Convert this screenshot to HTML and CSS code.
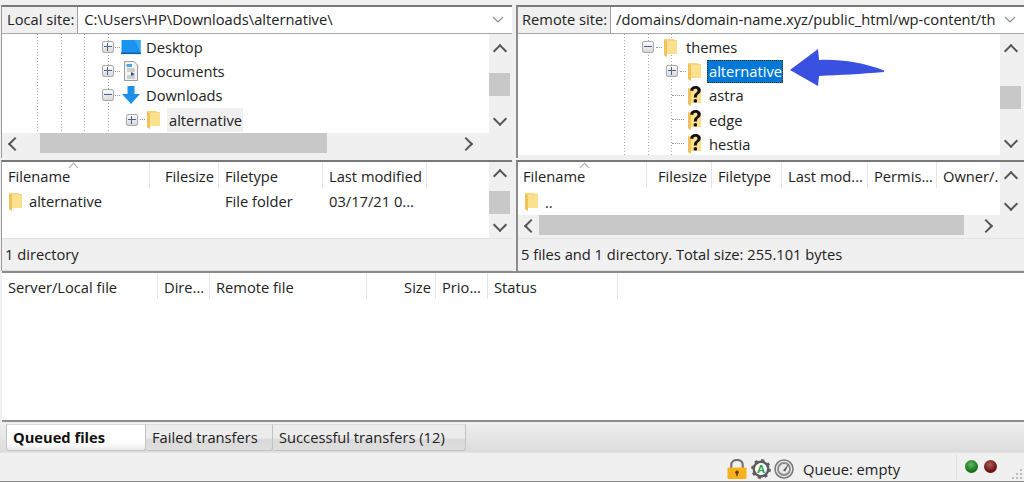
FILE: index.html
```html
<!DOCTYPE html>
<html lang="en">
<head>
<meta charset="utf-8">
<title>FileZilla</title>
<link rel="stylesheet" href="styles.css">
</head>
<body>
<svg class="defs" width="0" height="0" aria-hidden="true">
  <defs>
    <symbol id="folder" viewBox="0 0 13 19">
      <path d="M0 1H9L10 2H13V16H3V19L0 17Z" fill="#fbe08e"/>
      <path d="M0 1L3 3V19L0 17Z" fill="#f0c35a"/>
      <path d="M0 1H9L10 2H13V3H3Z" fill="#f7d67e"/>
    </symbol>
    <symbol id="qfolder" viewBox="0 0 17 21">
      <path d="M1 3H10L11 4H14V18H4V21L1 19Z" fill="#fbe08e"/>
      <path d="M1 3L4 5V21L1 19Z" fill="#f0c35a"/>
      <path d="M3.2 5.5C3.4 2.6 5.4 1 8.4 1C11.6 1 13.8 2.7 13.8 5.3C13.8 7.2 12.7 8.2 11.3 9.2C10.2 10 9.9 10.6 9.9 12.4H6.9C6.9 10 7.4 8.9 8.9 7.9C10 7.1 10.5 6.5 10.5 5.5C10.5 4.3 9.7 3.7 8.4 3.7C7.1 3.7 6.3 4.5 6.2 5.9Z" fill="#111"/>
      <rect x="6.8" y="14.2" width="3.2" height="3.4" rx="1" fill="#111"/>
    </symbol>
  </defs>
</svg>
<div class="app">
  <div class="panes">
    <section class="pane">
      <div class="site">
        <div class="site-label">Local site:</div>
        <div class="site-input">
          <span class="path">C:\Users\HP\Downloads\alternative\</span>
          <svg class="combo" viewBox="0 0 12 7"><path d="M1 1L6 6L11 1" fill="none" stroke="#8a8a8a" stroke-width="1.2"/></svg>
        </div>
      </div>
      <div class="body local-tree-h">
        <div class="tree tree-left">
          <div class="row in-left-1"><span class="twisty plus"></span><span class="dots short"></span>
            <svg class="ico-20 ico-desktop" viewBox="0 0 20 15"><rect x="0.5" y="0.5" width="19" height="13" fill="#1a94f0"/><rect x="0" y="13" width="20" height="1.6" fill="#0a5fa8"/><path d="M14 0.5H19.500V13Z" fill="#36aaf7"/></svg>
            <span class="label gap-5">Desktop</span></div>
          <div class="row in-left-1"><span class="twisty plus"></span><span class="dots short"></span>
            <svg class="ico-20" viewBox="0 0 20 20"><path d="M3.5 .5H13L16.500 4V19.500H3.500Z" fill="#f4f4f4" stroke="#9a9a9a"/><path d="M5.500 3H11V6H5.500Z" fill="#4fa7e8"/><path d="M6 8H14M6 10H14M6 15H14M6 17H14" stroke="#a8a8a8"/><path d="M10 11L14 13L10 15Z" fill="#33567a"/></svg>
            <span class="label gap-5">Documents</span></div>
          <div class="row in-left-1"><span class="twisty minus"></span><span class="dots short"></span>
            <svg class="ico-20" viewBox="0 0 20 20"><path d="M6.500 1H13.500V9H19L10 19L1 9H6.500Z" fill="#1d8fe6"/></svg>
            <span class="label gap-5">Downloads</span></div>
          <div class="row in-left-2"><span class="twisty plus"></span><span class="dots mid"></span>
            <svg class="ico-folder"><use href="#folder"/></svg>
            <span class="label hover">alternative</span></div>
        </div>
        <div class="vbar vbar-tree vbar-inset">
          <span class="arrow up"></span>
          <div class="track pad-thumb-a"><span class="thumb"></span></div>
          <span class="arrow down"></span>
        </div>
      </div>
      <div class="hbar hbar-left">
        <span class="arrow left"></span>
        <div class="htrack"><span class="hthumb w-left"></span></div>
        <span class="arrow right"></span>
      </div>
    </section>

    <section class="pane remote">
      <div class="site">
        <div class="site-label">Remote site:</div>
        <div class="site-input">
          <span class="path">/domains/domain-name.xyz/public_html/wp-content/th</span>
          <svg class="combo" viewBox="0 0 12 7"><path d="M1 1L6 6L11 1" fill="none" stroke="#8a8a8a" stroke-width="1.2"/></svg>
        </div>
      </div>
      <div class="body remote-tree-h">
        <div class="tree tree-right">
          <div class="row in-right-1"><span class="twisty minus"></span><span class="dots"></span>
            <svg class="ico-folder"><use href="#folder"/></svg>
            <span class="label gap-8">themes</span></div>
          <div class="row in-right-2"><span class="twisty plus"></span><span class="dots"></span>
            <svg class="ico-folder"><use href="#folder"/></svg>
            <span class="label selected">alternative</span></div>
          <div class="row in-right-3"><span class="dots long"></span>
            <svg class="ico-q"><use href="#qfolder"/></svg>
            <span class="label gap-6">astra</span></div>
          <div class="row in-right-3"><span class="dots long"></span>
            <svg class="ico-q"><use href="#qfolder"/></svg>
            <span class="label gap-6">edge</span></div>
          <div class="row in-right-3"><span class="dots long"></span>
            <svg class="ico-q"><use href="#qfolder"/></svg>
            <span class="label gap-6">hestia</span></div>
        </div>
        <div class="vbar vbar-tree vbar-inset-r">
          <span class="arrow up"></span>
          <div class="track pad-thumb-b"><span class="thumb"></span></div>
          <span class="arrow down"></span>
        </div>
      </div>
      <svg class="pointer" viewBox="0 0 96 38"><path d="M0 21L28 0L29 11C50 10 75 14 94 21.500V23C70 25 50 26 29 27L28 37Z" fill="#3a50e0"/></svg>
    </section>

    <section class="pane list-pane">
      <div class="body list-left-h">
        <div class="list">
          <div class="cols cols-left head">
            <span class="cell">Filename<i class="sort"></i></span>
            <span class="cell end">Filesize</span>
            <span class="cell">Filetype</span>
            <span class="cell">Last modified</span>
          </div>
          <div class="cols cols-left entry">
            <span class="name"><svg class="ico-folder"><use href="#folder"/></svg>alternative</span>
            <span></span>
            <span class="value">File folder</span>
            <span class="value">03/17/21 0...</span>
          </div>
        </div>
        <div class="vbar vbar-list vbar-inset">
          <span class="arrow up"></span>
          <div class="track pad-thumb-c"><span class="thumb"></span></div>
          <span class="arrow down"></span>
        </div>
      </div>
      <div class="status">1 directory</div>
    </section>

    <section class="pane list-pane">
      <div class="body list-right-h">
        <div class="list">
          <div class="cols cols-right head">
            <span class="cell">Filename<i class="sort"></i></span>
            <span class="cell end">Filesize</span>
            <span class="cell">Filetype</span>
            <span class="cell">Last mod...</span>
            <span class="cell">Permis...</span>
            <span class="cell">Owner/.</span>
          </div>
          <div class="cols cols-right entry short">
            <span class="name"><svg class="ico-folder"><use href="#folder"/></svg>..</span>
          </div>
        </div>
        <div class="vbar vbar-short vbar-inset-r">
          <span class="arrow up"></span>
          <div class="track"></div>
          <span class="arrow down"></span>
        </div>
      </div>
      <div class="hbar hbar-right">
        <span class="arrow left"></span>
        <div class="htrack"><span class="hthumb w-right"></span></div>
        <span class="arrow right"></span>
      </div>
      <div class="status">5 files and 1 directory. Total size: 255.101 bytes</div>
    </section>
  </div>

  <section class="queue">
    <div class="cols cols-queue head">
      <span class="cell">Server/Local file</span>
      <span class="cell">Dire...</span>
      <span class="cell">Remote file</span>
      <span class="cell end">Size</span>
      <span class="cell">Prio...</span>
      <span class="cell">Status</span>
    </div>
  </section>

  <nav class="tabs">
    <span class="tab active">Queued files</span>
    <span class="tab t2">Failed transfers</span>
    <span class="tab t3">Successful transfers (12)</span>
  </nav>

  <footer class="statusbar">
    <svg class="ico-s lock" viewBox="0 0 21 21"><path d="M4.500 10V6.500C4.500 3 7 1 10.500 1C14 1 16.500 3 16.500 6.500V10" fill="none" stroke="#6f6f6f" stroke-width="2.200"/><rect x="0.500" y="9" width="20" height="12" rx="1" fill="#f6b11c"/><circle cx="10.500" cy="14" r="1.800" fill="#5a4000"/><rect x="9.700" y="14" width="1.600" height="4" fill="#5a4000"/></svg>
    <svg class="ico-s gear" viewBox="0 0 20 20"><circle cx="10" cy="10" r="7.200" fill="none" stroke="#5c5c5c" stroke-width="2.600"/><circle cx="10" cy="10" r="8.700" fill="none" stroke="#5c5c5c" stroke-width="2.400" stroke-dasharray="3 3.830"/><circle cx="10" cy="10" r="5.800" fill="#fff"/><text x="10" y="14" class="gear-a">A</text></svg>
    <svg class="ico-s gauge" viewBox="0 0 20 20"><circle cx="10" cy="10" r="9" fill="#e8e8e8" stroke="#7a7a7a" stroke-width="1.600"/><circle cx="10" cy="10" r="6" fill="none" stroke="#8a8a8a" stroke-width="1.800"/><path d="M9 11.500L15 4.500L11.200 12.500Z" fill="#555"/></svg>
    <span class="queue-state">Queue: empty</span>
    <span class="divider"></span>
    <span class="led green"></span>
    <span class="led red"></span>
    <svg class="grip" viewBox="0 0 12 12"><path d="M9 9h2v2H9zM5 9h2v2H5zM1 9h2v2H1zM9 5h2v2H9zM5 5h2v2H5zM9 1h2v2H9z" fill="#bdbdbd"/></svg>
  </footer>
</div>
</body>
</html>
```
FILE: styles.css
```css
* { box-sizing: border-box; }
html, body { margin: 0; padding: 0; }
body {
  width: 1024px;
  height: 482px;
  overflow: hidden;
  background: #f0f0f0;
  color: #222;
  font: 14.7px/20px "Open Sans", "Noto Sans", sans-serif;
}
.defs { position: absolute; }
.app {
  height: 482px;
  display: flex;
  flex-direction: column;
  border-bottom: 1px solid #8a8a8a;
}
.panes {
  display: grid;
  grid-template-columns: 510px 508px;
  grid-template-rows: 153px 111px;
  column-gap: 4px;
  row-gap: 2px;
  padding: 5px 0 0 2px;
}
.pane {
  position: relative;
  display: flex;
  flex-direction: column;
  border-top: 2px solid #787878;
  min-width: 0;
}
.pane:nth-child(even) { border-left: 2px solid #8c8c8c; }
.pane:nth-child(odd) { border-left: 1px solid #9a9a9a; margin-left: -1px; }

.site { display: flex; height: 27px; flex: none; border-bottom: 1px solid #a8a8a8; }
.site-label {
  flex: none;
  padding: 2px 3px 0 5px;
  background: #f0f0f0;
  border-right: 1px solid #a0a0a0;
  white-space: nowrap;
}
.remote .site-label { padding-left: 4px; padding-right: 3px; }
.site-input {
  flex: 1;
  min-width: 0;
  display: flex;
  align-items: center;
  justify-content: space-between;
  padding: 0 8px 2px 6px;
  background: #fff;
}
.remote .site-input { padding-left: 5px; }
.path { overflow: hidden; white-space: nowrap; width: 0; flex: 1; }
.combo { flex: none; width: 12px; height: 7px; margin-left: 8px; }

.body { display: flex; flex: none; }
.local-tree-h { height: 99px; }
.remote-tree-h { height: 121px; }
.list-left-h { height: 76px; }
.list-right-h { height: 53px; }

.tree { flex: 1; min-width: 0; background-color: #fff; padding-top: 1px; overflow: hidden; background-repeat: repeat-y; background-size: 1px 3px; }
.tree-left {
  background-image:
    linear-gradient(#aaa 1px, transparent 1px),
    linear-gradient(#aaa 1px, transparent 1px),
    linear-gradient(#aaa 1px, transparent 1px),
    linear-gradient(#aaa 1px, transparent 1px);
  background-position: 35px 0, 59px 0, 82px 0, 106px 0;
}
.tree-right {
  background-image:
    linear-gradient(#aaa 1px, transparent 1px),
    linear-gradient(#aaa 1px, transparent 1px),
    linear-gradient(#aaa 1px, transparent 1px);
  background-position: 106px 0, 130px 0, 153px 0;
}
.row { display: flex; align-items: center; height: 24.2px; white-space: nowrap; }
.in-left-1 { padding-left: 100px; }
.in-left-2 { padding-left: 124px; }
.in-right-1 { padding-left: 124px; }
.in-right-2 { padding-left: 148px; }
.in-right-3 { padding-left: 154px; }

.twisty {
  position: relative;
  flex: none;
  width: 12px;
  height: 12px;
  border: 1px solid #a9a9a9;
  border-radius: 2px;
  background: linear-gradient(#fbfbfb, #d9d9d9);
}
.twisty::before {
  content: "";
  position: absolute;
  left: 1px;
  top: 4px;
  width: 8px;
  height: 2px;
  border-top: 1px solid #4a5f96;
}
.plus::after {
  content: "";
  position: absolute;
  left: 4px;
  top: 1px;
  width: 2px;
  height: 8px;
  border-left: 1px solid #4a5f96;
}
.dots { flex: none; width: 6px; margin: 0 2px; border-top: 1px dotted #999; }
.dots.short { width: 5px; margin: 0 1px; }
.dots.mid { width: 5px; }
.dots.long { width: 12px; margin: 0 3px 0 0; }
.ico-20 { flex: none; width: 20px; height: 20px; }
.ico-folder { flex: none; width: 13px; height: 19px; }
.ico-q { flex: none; width: 17px; height: 21px; }
.label { padding: 0 2px; }
.gap-5 { margin-left: 3px; }
.gap-8 { margin-left: 7px; }
.gap-6 { margin-left: 3px; }
.hover { margin-left: 7px; padding: 0 1px 0 2px; height: 24px; line-height: 24px; background: #f0f0f0; }
.selected {
  margin-left: 6px;
  padding: 0 0 0 1px;
  height: 23px;
  line-height: 21px;
  background: #0078d7;
  color: #fff;
  border: 1px dotted #3a2a10;
}

.vbar {
  flex: none;
  width: 21px;
  display: flex;
  flex-direction: column;
  background: #f0f0f0;
  align-items: stretch;
}
.vbar-inset { margin-right: 2px; }
.vbar-inset-r { margin-right: 3px; }
.vbar-tree { padding: 3px 0; }
.vbar-list { padding-bottom: 2px; }
.vbar-short { padding: 2px 0 0; }
.track { flex: 1; }
.thumb { display: block; height: 23px; background: #c8c8c8; }
.pad-thumb-a { padding-top: 15px; }
.pad-thumb-b { padding-top: 28px; }
.pad-thumb-c { padding-top: 8px; }

.arrow { flex: none; display: block; position: relative; width: 21px; height: 21px; }
.arrow::before {
  content: "";
  position: absolute;
  left: 6px;
  top: 6px;
  width: 8px;
  height: 8px;
  border-left: 2px solid #555;
  border-top: 2px solid #555;
}
.up::before { transform: translateY(3px) rotate(45deg); }
.down::before { transform: translateY(-1px) rotate(225deg); }
.left::before { transform: translateX(2px) rotate(-45deg); }
.right::before { transform: translateX(-1px) rotate(135deg); }

.hbar { display: flex; flex: none; height: 20px; background: #f0f0f0; }
.hbar .arrow { height: 20px; }
.htrack { flex: 1; min-width: 0; }
.hthumb { display: block; height: 20px; background: #c8c8c8; }
.hbar-left { padding-right: 35px; }
.hbar-left .htrack { padding-left: 17px; }
.w-left { width: 287px; }
.hbar-right { padding-right: 27px; margin-bottom: 3px; }
.w-right { width: 425px; }

.list-pane { background: #f0f0f0; }
.list { flex: 1; min-width: 0; background: #fff; overflow: hidden; }
.cols { display: grid; }
.cols-left { grid-template-columns: 148px 69px 104px 104px 1fr; }
.cols-right { grid-template-columns: 129px 65px 70px 86px 69px 1fr; }
.cols-queue { grid-template-columns: 156px 52px 157px 69px 52px 130px 1fr; }
.head { height: 26px; white-space: nowrap; }
.cell {
  position: relative;
  height: 26px;
  padding: 4px 0 0 6px;
  border-right: 1px solid #e5e5e5;
}
.cols-right .cell:first-child { padding-left: 5px; }
.cols-right .cell:last-child { border-right: 0; }
.end { text-align: right; padding-right: 4px; padding-left: 0; }
.sort {
  position: absolute;
  left: 68px;
  top: -1px;
  width: 7px;
  height: 7px;
  border-left: 1px solid #aaa;
  border-top: 1px solid #aaa;
  transform: translateY(3px) rotate(45deg);
}
.cols-right .sort { left: 63px; }
.entry { height: 26px; }
.entry.short { height: 27px; }
.name { display: flex; align-items: center; gap: 7px; padding-left: 7px; white-space: nowrap; }
.value { padding: 3px 0 0 6px; white-space: nowrap; }

.status {
  flex: 1;
  padding: 5px 0 0 3px;
  border-top: 1px solid #e3e3e3;
  border-bottom: 1px solid #dcdcdc;
}

.queue {
  flex: none;
  height: 151px;
  margin: 0 0 0 2px;
  background: #fff;
  border-top: 2px solid #8c8c8c;
  border-bottom: 2px solid #8c8c8c;
}
.tabs {
  flex: none;
  display: flex;
  height: 31px;
  padding: 2px 0 0 6px;
  background: linear-gradient(#f0f0f0, #dcdcdc);
  border-bottom: 1px solid #e2e2e2;
}
.tab {
  height: 27px;
  padding: 2px 0 0 6px;
  border: 1px solid #c2c2c2;
  border-top-color: #dcdcdc;
  border-left: 0;
  border-radius: 0 0 3px 3px;
  background: linear-gradient(#ececec 50%, #d9d9d9 60%, #dedede);
  white-space: nowrap;
}
.active { width: 140px; background: linear-gradient(#fff 70%, #ebebeb); font-weight: 700; border-left: 1px solid #c2c2c2; color: #111; }
.t2 { width: 127px; }
.t3 { width: 193px; }

.statusbar {
  flex: 1;
  position: relative;
  display: flex;
  align-items: center;
  padding: 0 0 0 727px;
}
.ico-s { flex: none; width: 20px; height: 20px; margin-top: 3px; }
.gear { margin-left: 4px; }
.gauge { margin-left: 3px; }
.gear-a { font: 700 11px "Open Sans", sans-serif; text-anchor: middle; fill: #2fa24a; }
.queue-state { margin: 4px 0 0 9px; width: 153px; white-space: nowrap; }
.divider { flex: none; width: 1px; height: 26px; background: #e2e2e2; }
.led { flex: none; width: 13px; height: 13px; border-radius: 50%; margin: -2px 0 0 8px; }
.green { background: radial-gradient(circle at 45% 35%, #62b662, #0f6a12 70%); }
.red { margin-left: 6px; background: radial-gradient(circle at 45% 35%, #a96060, #66080c 70%); }
.grip { position: absolute; right: 1px; bottom: 1px; width: 12px; height: 12px; }
.pointer { position: absolute; left: 272px; top: 42px; width: 96px; height: 38px; }
```
